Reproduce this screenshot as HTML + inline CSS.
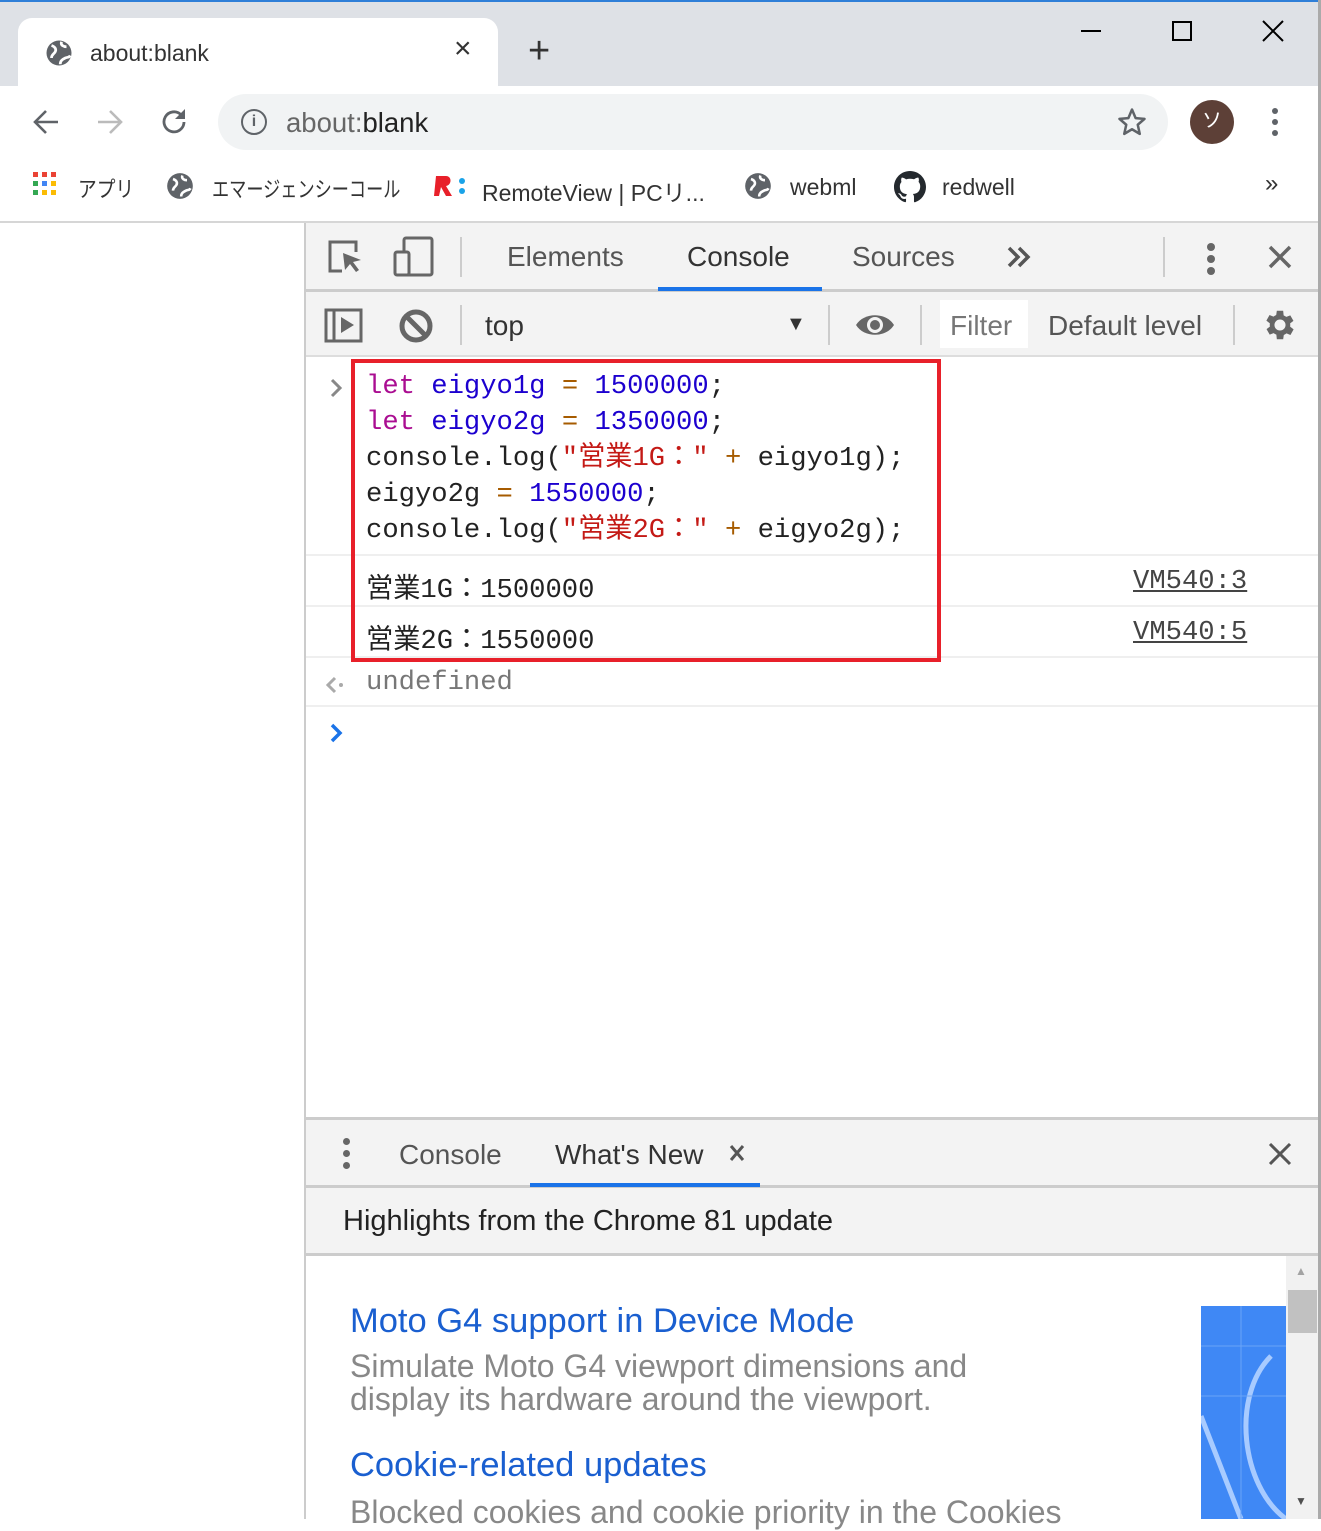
<!DOCTYPE html>
<html><head><meta charset="utf-8"><style>
*{margin:0;padding:0;box-sizing:border-box}
body{width:1321px;height:1519px;position:relative;overflow:hidden;background:#fff;font-family:"Liberation Sans","Noto Sans CJK JP",sans-serif;color:#333}
.a{position:absolute;white-space:nowrap}
.mono{font-family:"Liberation Mono","Noto Sans CJK JP",monospace;font-size:27.2px}
.kw{color:#aa0d91}.v{color:#1c00cf}.n{color:#1c00cf}.s{color:#c41a16}.o{color:#a65b00}
</style></head><body>
<!-- title bar -->
<div class="a" style="left:0;top:0;width:1321px;height:86px;background:#dee1e6"></div>
<div class="a" style="left:0;top:0;width:1321px;height:2px;background:#2f7fd8"></div>
<div class="a" style="left:18px;top:18px;width:480px;height:70px;background:#fff;border-radius:14px 14px 0 0"></div>
<svg class="a" style="left:44px;top:38px" width="30" height="30" viewBox="0 0 24 24"><circle cx="12" cy="12" r="10" fill="#5f6368"/><path d="M6 6c3 1 4 3 3 5s-3 2-3 5M14 3c-1 3 2 4 4 4M13 21c0-3 2-4 4-5s3 0 4-2" stroke="#fff" stroke-width="2.2" fill="none"/></svg>
<div class="a" style="left:90px;top:40px;font-size:23px;color:#333">about:blank</div>
<div class="a" style="left:454px;top:32px;font-size:30px;color:#333">×</div>
<div class="a" style="left:528px;top:30px;font-size:38px;color:#333;font-weight:300">+</div>
<div class="a" style="left:1081px;top:30px;width:20px;height:2px;background:#000"></div>
<div class="a" style="left:1172px;top:21px;width:20px;height:20px;border:2px solid #000"></div>
<svg class="a" style="left:1262px;top:20px" width="22" height="22"><path d="M1 1L21 21M21 1L1 21" stroke="#000" stroke-width="2"/></svg>
<!-- toolbar -->
<svg class="a" style="left:32px;top:108px" width="28" height="28"><path d="M26 14H3M14 3L3 14l11 11" stroke="#5f6368" stroke-width="2.6" fill="none"/></svg>
<svg class="a" style="left:96px;top:108px" width="28" height="28"><path d="M2 14h23M14 3l11 11-11 11" stroke="#bbb" stroke-width="2.6" fill="none"/></svg>
<svg class="a" style="left:160px;top:107px" width="30" height="30"><path d="M24 15a10 10 0 1 1-3-7.3" stroke="#5f6368" stroke-width="2.8" fill="none"/><path d="M25 2v10H15z" fill="#5f6368"/></svg>
<div class="a" style="left:218px;top:94px;width:950px;height:56px;background:#f1f3f4;border-radius:28px"></div>
<div class="a" style="left:241px;top:109px;width:26px;height:26px;border:2.5px solid #5f6368;border-radius:50%;font-size:16px;text-align:center;line-height:21px;color:#5f6368;font-weight:bold">i</div>
<div class="a" style="left:286px;top:107px;font-size:27.5px;color:#666">about:<span style="color:#222">blank</span></div>
<svg class="a" style="left:1117px;top:107px" width="30" height="30" viewBox="0 0 24 24"><path d="M12 2l2.9 6.9 7.1.6-5.4 4.7 1.6 7.3L12 17.8 5.8 21.5l1.6-7.3L2 9.5l7.1-.6z" stroke="#5f6368" stroke-width="2" fill="none" stroke-linejoin="round"/></svg>
<div class="a" style="left:1190px;top:100px;width:44px;height:44px;border-radius:50%;background:#5d4037;color:#fff;text-align:center;line-height:42px;font-size:20px">ソ</div>
<div class="a" style="left:1272px;top:108px;width:6px;height:6px;border-radius:3px;background:#5f6368;box-shadow:0 11px 0 #5f6368,0 22px 0 #5f6368"></div>
<!-- bookmarks -->
<svg class="a" style="left:33px;top:172px" width="24" height="26"><g fill="#ea4335"><rect x="0" y="0" width="5" height="5"/><rect x="9" y="0" width="5" height="5"/><rect x="18" y="0" width="5" height="5"/></g><g><rect x="0" y="9" width="5" height="5" fill="#34a853"/><rect x="9" y="9" width="5" height="5" fill="#4285f4"/><rect x="18" y="9" width="5" height="5" fill="#fbbc05"/><rect x="0" y="18" width="5" height="5" fill="#34a853"/><rect x="9" y="18" width="5" height="5" fill="#fbbc05"/><rect x="18" y="18" width="5" height="5" fill="#fbbc05"/></g></svg>
<div class="a" style="left:78px;top:172px;font-size:22px;color:#333;transform:scaleX(0.85);transform-origin:left">アプリ</div>
<svg class="a" style="left:166px;top:172px" width="28" height="28" viewBox="0 0 24 24"><circle cx="12" cy="12" r="11" fill="#5f6368"/><path d="M6 6c3 1 4 3 3 5s-3 2-3 5M14 3c-1 3 2 4 4 4M13 21c0-3 2-4 4-5s3 0 4-2" stroke="#fff" stroke-width="2.2" fill="none"/></svg>
<div class="a" style="left:212px;top:172px;font-size:22px;color:#333;transform:scaleX(0.78);transform-origin:left">エマージェンシーコール</div>
<svg class="a" style="left:432px;top:174px" width="36" height="24"><path d="M2 22L4 2h10c6 0 6 9 0 10l6 10h-6l-5-9-2 9z" fill="#e8202a"/><circle cx="30" cy="7" r="3" fill="#1aa3e8"/><circle cx="30" cy="17" r="3" fill="#1aa3e8"/></svg>
<div class="a" style="left:482px;top:174px;font-size:23px;color:#333">RemoteView | PCリ...</div>
<svg class="a" style="left:744px;top:172px" width="28" height="28" viewBox="0 0 24 24"><circle cx="12" cy="12" r="11" fill="#5f6368"/><path d="M6 6c3 1 4 3 3 5s-3 2-3 5M14 3c-1 3 2 4 4 4M13 21c0-3 2-4 4-5s3 0 4-2" stroke="#fff" stroke-width="2.2" fill="none"/></svg>
<div class="a" style="left:790px;top:174px;font-size:23px;color:#333">webml</div>
<svg class="a" style="left:894px;top:171px" width="32" height="32" viewBox="0 0 16 16"><path fill="#24292e" d="M8 0C3.58 0 0 3.58 0 8c0 3.54 2.29 6.53 5.47 7.59.4.07.55-.17.55-.38v-1.33c-2.23.48-2.7-1.07-2.7-1.07-.36-.92-.89-1.17-.89-1.17-.73-.5.06-.49.06-.49.8.06 1.23.83 1.23.83.71 1.23 1.87.87 2.33.66.07-.52.28-.87.51-1.07-1.78-.2-3.64-.89-3.64-3.95 0-.87.31-1.59.82-2.15-.08-.2-.36-1.02.08-2.12 0 0 .67-.21 2.2.82A7.6 7.6 0 0 1 8 3.87c.68 0 1.36.09 2 .27 1.53-1.04 2.2-.82 2.2-.82.44 1.1.16 1.92.08 2.12.51.56.82 1.27.82 2.15 0 3.07-1.87 3.75-3.65 3.95.29.25.54.73.54 1.48v2.2c0 .21.15.46.55.38A8.01 8.01 0 0 0 16 8c0-4.42-3.58-8-8-8z"/></svg>
<div class="a" style="left:942px;top:174px;font-size:23px;color:#333">redwell</div>
<div class="a" style="left:1265px;top:170px;font-size:24px;color:#333">»</div>
<div class="a" style="left:0;top:221px;width:1321px;height:2px;background:#d6d6d6"></div>
<!-- devtools -->
<div class="a" style="left:304px;top:223px;width:2px;height:1296px;background:#ccc"></div>
<div class="a" style="left:1318px;top:0;width:3px;height:1519px;background:#aaa"></div>
<div class="a" style="left:306px;top:223px;width:1012px;height:67px;background:#f3f3f3"></div>
<div class="a" style="left:306px;top:289px;width:1012px;height:3px;background:#ccc"></div>
<div class="a" style="left:658px;top:287px;width:164px;height:4px;background:#1a73e8"></div>
<svg class="a" style="left:326px;top:238px" width="44" height="40"><path d="M16 33H4V4h26v10" stroke="#666" stroke-width="3" fill="none"/><path d="M17 15l18 7-8 2 6 8-3 2-6-8-5 6z" fill="#666"/></svg>
<svg class="a" style="left:392px;top:236px" width="44" height="42"><rect x="12" y="2" width="28" height="37" rx="2" stroke="#666" stroke-width="3" fill="none"/><rect x="3" y="16" width="14" height="23" rx="2" stroke="#666" stroke-width="3" fill="#f3f3f3"/></svg>
<div class="a" style="left:460px;top:237px;width:2px;height:40px;background:#ccc"></div>
<div class="a" style="left:507px;top:241px;font-size:28px;color:#555">Elements</div>
<div class="a" style="left:687px;top:241px;font-size:28px;color:#333">Console</div>
<div class="a" style="left:852px;top:241px;font-size:28px;color:#555">Sources</div>
<svg class="a" style="left:1006px;top:246px" width="26" height="22"><path d="M3 2l9 9-9 9M13 2l9 9-9 9" stroke="#555" stroke-width="3.5" fill="none"/></svg>
<div class="a" style="left:1163px;top:237px;width:2px;height:40px;background:#ccc"></div>
<div class="a" style="left:1207px;top:243px;width:8px;height:8px;border-radius:4px;background:#666;box-shadow:0 12px 0 #666,0 24px 0 #666"></div>
<svg class="a" style="left:1268px;top:245px" width="24" height="24"><path d="M2 2L22 22M22 2L2 22" stroke="#666" stroke-width="3.5"/></svg>
<!-- console toolbar -->
<div class="a" style="left:306px;top:292px;width:1012px;height:64px;background:#f3f3f3"></div>
<div class="a" style="left:306px;top:355px;width:1012px;height:2px;background:#ddd"></div>
<svg class="a" style="left:324px;top:308px" width="40" height="36"><rect x="2" y="2" width="35" height="31" stroke="#666" stroke-width="3" fill="none"/><line x1="10" y1="2" x2="10" y2="33" stroke="#666" stroke-width="3"/><path d="M17 9l13 8-13 8z" fill="#666"/></svg>
<svg class="a" style="left:398px;top:308px" width="36" height="36"><circle cx="18" cy="18" r="14" stroke="#666" stroke-width="5" fill="none"/><line x1="8" y1="8" x2="28" y2="28" stroke="#666" stroke-width="5"/></svg>
<div class="a" style="left:460px;top:305px;width:2px;height:40px;background:#ccc"></div>
<div class="a" style="left:485px;top:310px;font-size:28px;color:#333">top</div>
<div class="a" style="left:786px;top:313px;font-size:20px;color:#333">▼</div>
<div class="a" style="left:828px;top:305px;width:2px;height:40px;background:#ccc"></div>
<svg class="a" style="left:854px;top:310px" width="42" height="30"><path d="M2 15C10 2 32 2 40 15 32 28 10 28 2 15z" fill="#666"/><circle cx="21" cy="15" r="8" fill="#f3f3f3"/><circle cx="21" cy="15" r="5" fill="#666"/></svg>
<div class="a" style="left:920px;top:305px;width:2px;height:40px;background:#ccc"></div>
<div class="a" style="left:940px;top:300px;width:88px;height:48px;background:#fff"></div>
<div class="a" style="left:950px;top:310px;font-size:28px;color:#777">Filter</div>
<div class="a" style="left:1048px;top:310px;font-size:28px;color:#555">Default level</div>
<div class="a" style="left:1233px;top:305px;width:2px;height:40px;background:#ccc"></div>
<svg class="a" style="left:1261px;top:306px" width="38" height="38" viewBox="0 0 24 24"><path fill="#666" d="M19.4 13a7.5 7.5 0 000-2l2.1-1.6-2-3.5-2.5 1a7 7 0 00-1.7-1L15 3h-4l-.4 2.7a7 7 0 00-1.7 1l-2.5-1-2 3.5L6.6 11a7.5 7.5 0 000 2l-2.1 1.6 2 3.5 2.5-1a7 7 0 001.7 1L11 21h4l.4-2.7a7 7 0 001.7-1l2.5 1 2-3.5zM13 15.5a3.5 3.5 0 110-7 3.5 3.5 0 010 7z" transform="translate(-1 0)"/></svg>
<!-- console rows -->
<div class="a" style="left:306px;top:554px;width:1012px;height:2px;background:#efefef"></div>
<div class="a" style="left:306px;top:605px;width:1012px;height:2px;background:#efefef"></div>
<div class="a" style="left:306px;top:656px;width:1012px;height:2px;background:#efefef"></div>
<div class="a" style="left:306px;top:705px;width:1012px;height:2px;background:#efefef"></div>
<svg class="a" style="left:330px;top:378px" width="14" height="20"><path d="M2 2l8 8-8 8" stroke="#888" stroke-width="3" fill="none"/></svg>
<div class="a mono" style="left:366px;top:369px;line-height:36px;color:#222">
<span class="kw">let</span> <span class="v">eigyo1g</span> <span class="o">=</span> <span class="n">1500000</span>;<br>
<span class="kw">let</span> <span class="v">eigyo2g</span> <span class="o">=</span> <span class="n">1350000</span>;<br>
console.log(<span class="s">"営業1G："</span> <span class="o">+</span> eigyo1g);<br>
eigyo2g <span class="o">=</span> <span class="n">1550000</span>;<br>
console.log(<span class="s">"営業2G："</span> <span class="o">+</span> eigyo2g);</div>
<div class="a mono" style="left:366px;top:565px;color:#222">営業1G：1500000</div>
<div class="a mono" style="left:366px;top:616px;color:#222">営業2G：1550000</div>
<div class="a mono" style="left:1133px;top:566px;color:#444;text-decoration:underline">VM540:3</div>
<div class="a mono" style="left:1133px;top:617px;color:#444;text-decoration:underline">VM540:5</div>
<svg class="a" style="left:326px;top:676px" width="20" height="18"><path d="M9 2L2 9l7 7" stroke="#aaa" stroke-width="3" fill="none"/><circle cx="15" cy="9" r="2" fill="#aaa"/></svg>
<div class="a mono" style="left:366px;top:667px;color:#777">undefined</div>
<svg class="a" style="left:330px;top:723px" width="14" height="20"><path d="M2 2l8 8-8 8" stroke="#1a73e8" stroke-width="3.5" fill="none"/></svg>
<div class="a" style="left:351px;top:359px;width:590px;height:303px;border:4px solid #e8202a"></div>
<!-- drawer -->
<div class="a" style="left:306px;top:1117px;width:1012px;height:3px;background:#ccc"></div>
<div class="a" style="left:306px;top:1120px;width:1012px;height:66px;background:#f3f3f3"></div>
<div class="a" style="left:306px;top:1185px;width:1012px;height:3px;background:#ccc"></div>
<div class="a" style="left:530px;top:1183px;width:230px;height:4px;background:#1a73e8"></div>
<div class="a" style="left:343px;top:1138px;width:7px;height:7px;border-radius:4px;background:#666;box-shadow:0 12px 0 #666,0 24px 0 #666"></div>
<div class="a" style="left:399px;top:1139px;font-size:28px;color:#555">Console</div>
<div class="a" style="left:555px;top:1139px;font-size:28px;color:#333">What's New</div>
<svg class="a" style="left:729px;top:1144px" width="16" height="18"><path d="M2 2L14 16M14 2L2 16" stroke="#555" stroke-width="3"/></svg>
<svg class="a" style="left:1268px;top:1142px" width="24" height="24"><path d="M2 2L22 22M22 2L2 22" stroke="#555" stroke-width="3"/></svg>
<div class="a" style="left:306px;top:1188px;width:1012px;height:66px;background:#f3f3f3"></div>
<div class="a" style="left:306px;top:1253px;width:1012px;height:3px;background:#ccc"></div>
<div class="a" style="left:343px;top:1205px;font-size:29px;color:#222">Highlights from the Chrome 81 update</div>
<div class="a" style="left:350px;top:1302px;font-size:34.5px;color:#1a5fd0">Moto G4 support in Device Mode</div>
<div class="a" style="left:350px;top:1350px;font-size:32px;color:#888;line-height:33px">Simulate Moto G4 viewport dimensions and<br>display its hardware around the viewport.</div>
<div class="a" style="left:350px;top:1446px;font-size:34.5px;color:#1a5fd0">Cookie-related updates</div>
<div class="a" style="left:350px;top:1494px;font-size:32px;color:#888">Blocked cookies and cookie priority in the Cookies</div>
<div class="a" style="left:1201px;top:1306px;width:85px;height:213px;background:#3f88f5;overflow:hidden">
<svg width="85" height="213"><path d="M0 110L40 213M70 50C30 90 40 180 85 213" stroke="#a8cbff" stroke-width="5" fill="none"/><path d="M0 40H85M0 90H85M40 0V213" stroke="#6aa4f8" stroke-width="1"/></svg></div>
<div class="a" style="left:1286px;top:1256px;width:32px;height:263px;background:#f1f1f1"></div>
<div class="a" style="left:1288px;top:1290px;width:29px;height:43px;background:#c1c1c1"></div>
<div class="a" style="left:1295px;top:1264px;font-size:12px;color:#a3a3a3">▲</div>
<div class="a" style="left:1295px;top:1494px;font-size:12px;color:#505050">▼</div>
</body></html>
